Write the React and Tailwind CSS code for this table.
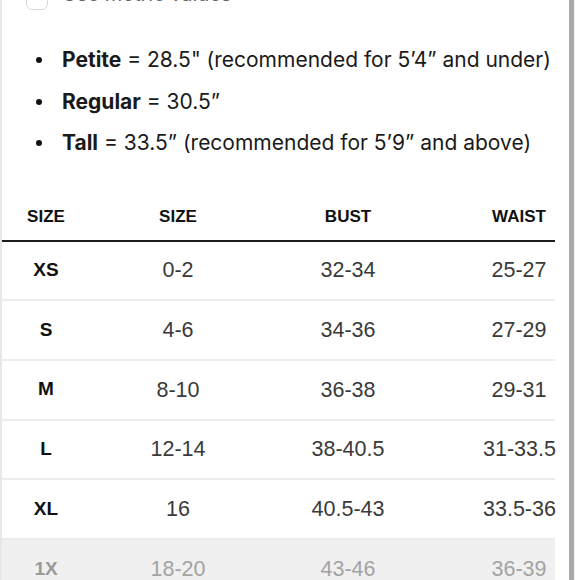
import React from 'react';

const lengths = [
  { label: 'Petite', rest: ' = 28.5" (recommended for 5\u20194\u201d and under)' },
  { label: 'Regular', rest: ' = 30.5\u201d' },
  { label: 'Tall', rest: ' = 33.5\u201d (recommended for 5\u20199\u201d and above)' },
];

const rows = [
  ['XS', '0-2', '32-34', '25-27'],
  ['S', '4-6', '34-36', '27-29'],
  ['M', '8-10', '36-38', '29-31'],
  ['L', '12-14', '38-40.5', '31-33.5'],
  ['XL', '16', '40.5-43', '33.5-36'],
];

function Row({ cells, muted }) {
  const txt = muted ? 'text-[#a3a3a3]' : 'text-[#3a3a3a]';
  const bold = muted ? 'text-[#9a9a9a]' : 'text-[#111]';
  return (
    <div
      className={`grid grid-cols-[88px_176px_164px_1fr] items-center h-[59.6px] ${
        muted ? 'bg-[#f0f0f0]' : 'bg-white border-b-2 border-[#ececec]'
      }`}
    >
      <div className={`text-center text-[19px] font-bold ${bold}`}>{cells[0]}</div>
      <div className={`text-center text-[21.5px] ${txt}`}>{cells[1]}</div>
      <div className={`text-center text-[21.5px] ${txt}`}>{cells[2]}</div>
      <div className="flex justify-end">
        <div className={`w-[72px] text-center text-[21.5px] whitespace-nowrap ${txt}`}>{cells[3]}</div>
      </div>
    </div>
  );
}

export default function App() {
  return (
    <div className="w-[580px] h-[580px] overflow-hidden flex bg-white">
      {/* content */}
      <div className="w-[569px] h-full border-l-2 border-[#e8e8e8]">
        <div className="-mt-[12px]" style={{ fontFamily: 'Inter, "Noto Sans", sans-serif' }}>
          {/* metric toggle, mostly scrolled away */}
          <div className="flex items-center h-[22px]">
            <div className="ml-[24px] w-[22px] h-[22px] rounded-md border border-[#d9d9d9] bg-white"></div>
            <span className="ml-[14px] text-[20px] text-[#666] leading-none -mt-[10px]">
              Use metric values
            </span>
          </div>

          {/* lengths */}
          <ul className="mt-[29.25px]">
            {lengths.map((l) => (
              <li key={l.label} className="flex items-center h-[41.5px]">
                <span className="ml-[34px] w-[6px] h-[6px] rounded-full bg-[#111]"></span>
                <span className="ml-[20px] text-[21px] text-[#1a1a1a] whitespace-nowrap">
                  <b className="font-bold">{l.label}</b>
                  {l.rest}
                </span>
              </li>
            ))}
          </ul>
        </div>

        {/* size table */}
        <div className="mt-[30px] w-[553px]" style={{ fontFamily: '"Liberation Sans", Arial, sans-serif' }}>
          <div className="grid grid-cols-[88px_176px_164px_1fr] items-center h-[48px] border-b-2 border-[#1c1c1c] text-[17px] font-bold text-[#111]">
            <div className="text-center">SIZE</div>
            <div className="text-center">SIZE</div>
            <div className="text-center">BUST</div>
            <div className="flex justify-end">
              <div className="w-[72px] text-center">WAIST</div>
            </div>
          </div>
          {rows.map((r) => (
            <Row key={r[0]} cells={r} />
          ))}
          <Row cells={['1X', '18-20', '43-46', '36-39']} muted />
        </div>
      </div>

      {/* scrollbar */}
      <div className="w-[5px] h-full bg-[#a8a8a8]"></div>
      <div className="flex-1 h-full bg-white border-l border-[#f2f2f2]"></div>
    </div>
  );
}
